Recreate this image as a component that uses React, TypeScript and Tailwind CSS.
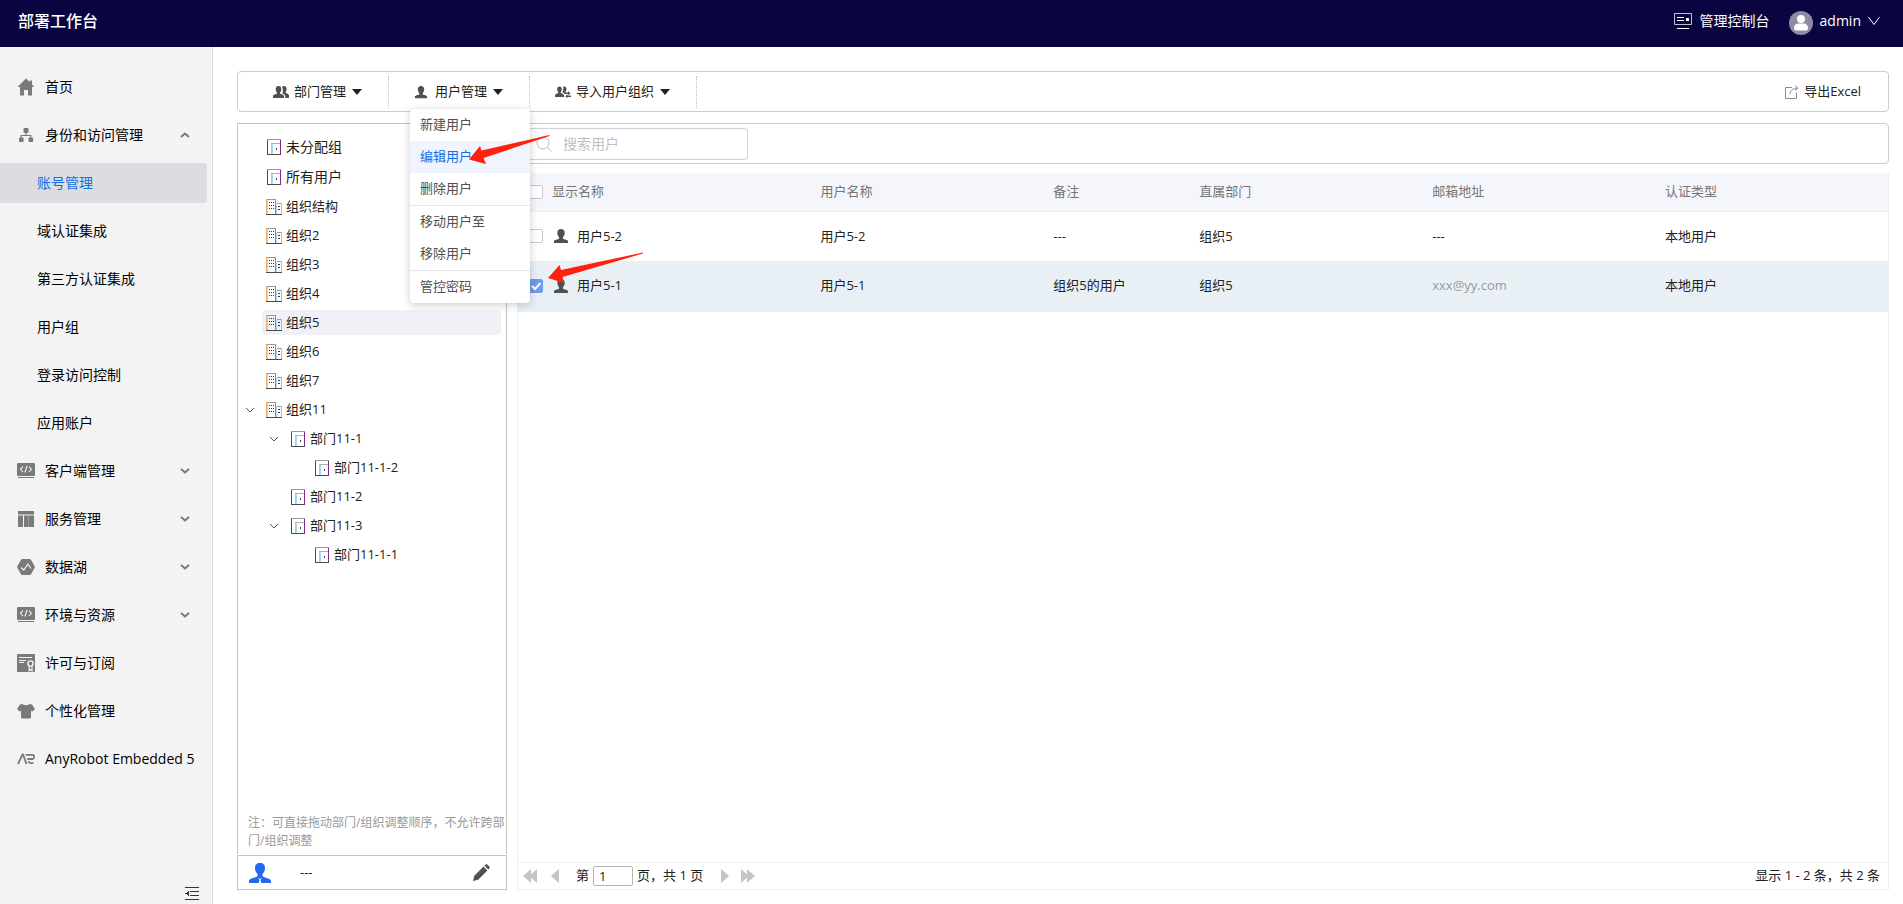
import { Fragment, type ReactNode } from "react";

import clsx from "clsx";

type IconProps = { className?: string };

function HomeIcon() {
  return (
    <svg viewBox="0 0 18 18" className="size-[18px]" fill="currentColor">
      <path d="M9 .5 13 4V2.500h2V6.500L17.500 9H15v8.500h-4V12H7v5.500H3V9H.5z" />
    </svg>
  );
}

function OrgChartIcon() {
  return (
    <svg viewBox="0 0 18 18" className="size-[18px]" fill="currentColor">
      <rect x="6.5" y="2" width="5" height="5" rx="1" />
      <rect x="2" y="11.5" width="4.6" height="4.5" rx="1" />
      <rect x="11.5" y="11.5" width="4.6" height="4.5" rx="1" />
      <path
        d="M9 7v2.500M4.200 12V9.500h9.600V12"
        fill="none"
        stroke="currentColor"
        strokeWidth="1.2"
      />
    </svg>
  );
}

function ClientIcon() {
  return (
    <svg viewBox="0 0 18 18" className="size-[18px]" fill="currentColor">
      <rect x="0" y="1" width="18" height="13" rx="1" />
      <rect x="1" y="15" width="16" height="1" />
      <path
        d="M6 4.500 3.500 7.300 6 10M12 4.500l2.500 2.800L12 10M10 4 8 10.500"
        fill="none"
        stroke="#f3f3f3"
        strokeWidth="1.1"
      />
    </svg>
  );
}

function ServiceIcon() {
  return (
    <svg viewBox="0 0 18 18" className="size-[18px]" fill="currentColor">
      <path d="M1 1h16v3.500H1zM1 5.500h5V17H1zM7 5.500h10V17H7z" />
      <path d="M11.500 5.500v11.500" stroke="#9a9a9a" strokeWidth="1" />
    </svg>
  );
}

function DataLakeIcon() {
  return (
    <svg viewBox="0 0 18 18" className="size-[18px]" fill="currentColor">
      <path d="M5.300 1h7.400a1.500 1.500 0 0 1 1.300.8L17.700 8.300a1.500 1.500 0 0 1 0 1.400L14 16.200a1.500 1.500 0 0 1-1.300.8H5.300a1.500 1.500 0 0 1-1.300-.8L.3 9.700a1.500 1.500 0 0 1 0-1.400L4 1.800A1.500 1.500 0 0 1 5.300 1z" />
      <path
        d="M4 9.500 6.800 12 11 6l3 4.500"
        fill="none"
        stroke="#f3f3f3"
        strokeWidth="1.2"
      />
    </svg>
  );
}

function LicenseIcon() {
  return (
    <svg viewBox="0 0 18 18" className="size-[18px]" fill="currentColor">
      <rect width="18" height="18" rx="1" />
      <g fill="none" stroke="#f3f3f3">
        <path d="M2 3.500h13M2 6.500h7M2 8.500h5" strokeWidth="1.1" />
        <circle cx="13.5" cy="9.5" r="2.6" strokeWidth="1.4" />
        <path d="M12.200 12v4.800l1.400-1 1.400 1V12" strokeWidth="1.2" />
      </g>
    </svg>
  );
}

function ShirtIcon() {
  return (
    <svg viewBox="0 0 18 18" className="size-[18px]" fill="currentColor">
      <path d="M5.500 2C6.500 3.500 11.500 3.500 12.500 2L15 2.500 18 7l-2.500 2.500-1.500-.8V15a1.500 1.500 0 0 1-1.500 1.500h-7A1.500 1.500 0 0 1 4 15V8.700l-1.500.8L0 7l3-4.500z" />
    </svg>
  );
}

function RobotIcon() {
  return (
    <svg
      viewBox="0 0 18 18"
      className="size-[18px]"
      fill="none"
      stroke="currentColor"
      strokeWidth="1.8"
    >
      <path d="M1 14 5.500 4.500H6L9.500 14" />
      <path d="M8.500 4.900h7.300q1.300 0 1.300 1.800t-1.300 2.300h-5.600" />
      <path d="M11 11.500 13.500 13.200H16.500" />
    </svg>
  );
}

function PersonIcon({ className }: IconProps) {
  return (
    <svg viewBox="0 0 16 16" className={className} fill="currentColor">
      <path d="M8 1c2.300 0 3.700 1.500 3.700 3.800 0 1.700-.7 3.300-1.700 4.200v1.800c1 .8 5 .8 5 2.700V15H1v-1.500c0-1.900 4-1.900 5-2.700V9C5 8.100 4.300 6.500 4.300 4.800 4.300 2.500 5.700 1 8 1z" />
    </svg>
  );
}

function GroupIcon() {
  return (
    <svg viewBox="0 0 16 16" className="size-4" fill="currentColor">
      <path d="M5.500 2c1.800 0 2.800 1.200 2.800 3S7.600 8 7 8.600v1C7.800 10.300 11 10.500 11 12.300V14H0v-1.700c0-1.800 3.200-2 4-2.700v-1C3.400 8 2.700 6.800 2.700 5s1-3 2.800-3z" />
      <path d="M9 2.800C9.500 2.300 10.100 2 11 2c1.800 0 2.600 1.200 2.600 2.800 0 1.300-.4 2.400-1 3v1c.8.700 3.400 1 3.400 2.700V14h-3.800v-2c0-1.500-1.500-2-2.700-2.600C10 8 10.200 4.500 9 2.800z" />
    </svg>
  );
}

function ImportIcon() {
  return (
    <svg viewBox="0 0 16 16" className="size-4" fill="currentColor">
      <path d="M4.500 2.500c1.500 0 2.300 1 2.300 2.500S6.300 7.500 5.800 8v1c.6.500 3.200.8 3.200 2.300V13H0v-1.700C0 9.800 2.600 9.500 3.200 9V8c-.5-.5-1-1.500-1-3s.8-2.500 2.300-2.500z" />
      <path d="M8 2.800c1.800-.8 3.500.2 3.500 2.200 0 1-.3 2-1 2.500v1H13V7.200l2.500 2L13 11.200V10H9.500C9 9 7.500 8.500 7.500 8 8.500 6 8.600 4 8 2.800zM16 11.500v1.400h-3.500V14L10 12.200l2.500-1.800v1.100z" />
    </svg>
  );
}

function ChevronIcon({ className }: IconProps) {
  return (
    <svg
      viewBox="0 0 10 10"
      className={className}
      fill="none"
      stroke="currentColor"
    >
      <path d="m1 3 4 4 4-4" />
    </svg>
  );
}

function DeptIcon() {
  return (
    <svg
      viewBox="0 0 14 16"
      className="mr-px h-4 w-3.5 shrink-0"
      shapeRendering="crispEdges"
    >
      <path d="M0 0h14v1H0z" fill="#999" />
      <path d="M0 1h1v14H0zM13 1h1v14h-1z" fill="#82288c" />
      <path d="M0 15h14v1H0z" fill="#4a4a4a" />
      <path d="M4 4h9v1H4z" fill="#b0b0b0" />
      <path d="M4 5h1v10H4z" fill="#f0bd7c" />
      <path d="M5 5h1v10H5z" fill="#a9d9f5" />
      <path d="M9 9h1v2H9z" fill="#444" />
    </svg>
  );
}

function BuildingIcon() {
  return (
    <svg
      viewBox="0 0 16 16"
      className="size-4 shrink-0"
      shapeRendering="crispEdges"
    >
      <path d="M1 0h9v1H1zM11 4h4v1h-4z" fill="#999" />
      <path d="M0 0h1v15H0zM15 4h1v11h-1z" fill="#eab26a" />
      <path d="M1 1h1v14H1zM10 5h1v10h-1z" fill="#a9d9f5" />
      <path d="M9 1h1v14H9z" fill="#6f8fb0" />
      <path
        d="M3 3h1v1H3zM5 3h1v1H5zM7 3h1v1H7zM3 6h1v1H3zM5 6h1v1H5zM7 6h1v1H7zM3 9h1v1H3zM5 9h1v1H5zM7 9h1v1H7zM12 7h2v1h-2zM12 10h2v1h-2z"
        fill="#333"
      />
      <path d="M0 15h16v1H0z" fill="#4a4a4a" />
    </svg>
  );
}

type NavItem = {
  label: string;
  icon: ReactNode;
  arrow?: "up" | "down";
  children?: string[];
};

const NAV: NavItem[] = [
  { label: "首页", icon: <HomeIcon /> },
  {
    label: "身份和访问管理",
    icon: <OrgChartIcon />,
    arrow: "up",
    children: [
      "账号管理",
      "域认证集成",
      "第三方认证集成",
      "用户组",
      "登录访问控制",
      "应用账户",
    ],
  },
  { label: "客户端管理", icon: <ClientIcon />, arrow: "down" },
  { label: "服务管理", icon: <ServiceIcon />, arrow: "down" },
  { label: "数据湖", icon: <DataLakeIcon />, arrow: "down" },
  { label: "环境与资源", icon: <ClientIcon />, arrow: "down" },
  { label: "许可与订阅", icon: <LicenseIcon /> },
  { label: "个性化管理", icon: <ShirtIcon /> },
  { label: "AnyRobot Embedded 5", icon: <RobotIcon /> },
];

const MENU_GROUPS = [
  ["新建用户", "编辑用户", "删除用户"],
  ["移动用户至", "移除用户"],
  ["管控密码"],
];

type TreeNode = {
  label: string;
  kind: "dept" | "org";
  level: number;
  open?: boolean;
};

const TREE: TreeNode[] = [
  { label: "组织结构", kind: "org", level: 0 },
  { label: "组织2", kind: "org", level: 0 },
  { label: "组织3", kind: "org", level: 0 },
  { label: "组织4", kind: "org", level: 0 },
  { label: "组织5", kind: "org", level: 0 },
  { label: "组织6", kind: "org", level: 0 },
  { label: "组织7", kind: "org", level: 0 },
  { label: "组织11", kind: "org", level: 0, open: true },
  { label: "部门11-1", kind: "dept", level: 1, open: true },
  { label: "部门11-1-2", kind: "dept", level: 2 },
  { label: "部门11-2", kind: "dept", level: 1 },
  { label: "部门11-3", kind: "dept", level: 1, open: true },
  { label: "部门11-1-1", kind: "dept", level: 2 },
];

const USERS = [
  {
    name: "用户5-2",
    login: "用户5-2",
    note: "---",
    dept: "组织5",
    email: "---",
    auth: "本地用户",
    checked: false,
  },
  {
    name: "用户5-1",
    login: "用户5-1",
    note: "组织5的用户",
    dept: "组织5",
    email: "xxx@yy.com",
    auth: "本地用户",
    checked: true,
  },
];

function Header() {
  return (
    <header className="flex h-[47px] shrink-0 items-center justify-between bg-[#0a0540] pr-[23px] pb-1.5 pl-[18px] text-sm text-white">
      <h1 className="text-base font-medium">部署工作台</h1>
      <div className="flex items-center">
        <a href="#" className="flex items-center gap-2">
          <svg
            viewBox="0 0 18 16"
            className="h-4 w-[18px]"
            fill="none"
            stroke="currentColor"
          >
            <path d="M.5.500h17v11H.5z" opacity=".75" />
            <path d="M3 4.500h7M3 7.500h7M3 15.500h12" />
            <path d="M12 5h3v3h-3z" fill="currentColor" stroke="none" />
          </svg>
          管理控制台
        </a>
        <button type="button" className="ml-[19px] flex items-center gap-[7px]">
          <svg viewBox="0 0 24 24" className="mt-1 size-6">
            <circle cx="12" cy="12" r="12" fill="#8d8ba6" />
            <circle cx="12" cy="8" r="4" fill="#fff" />
            <path
              d="M5 17c0-3 2-4.500 4-4.500h6c2 0 4 1.500 4 4.500 0 2-1 2.500-2 2.500H7c-1 0-2-.5-2-2.500z"
              fill="#fff"
            />
          </svg>
          admin
          <svg viewBox="0 0 12 12" className="size-3" fill="none" stroke="currentColor">
            <path d="m.5 2 5.500 7.500L11.500 2" />
          </svg>
        </button>
      </div>
    </header>
  );
}

function Sidebar() {
  return (
    <nav className="flex w-[213px] shrink-0 flex-col border-r border-[#dcdcdc] bg-[#f3f3f3] pt-5 text-sm text-black">
      <ul className="flex flex-col gap-2">
        {NAV.map((item) => (
          <Fragment key={item.label}>
            <li>
              <a href="#" className="flex h-10 items-center pr-[22px] pl-[17px]">
                <span className="mr-2.5 text-[#7a7a7a]">{item.icon}</span>
                <span className="flex-1 whitespace-nowrap">{item.label}</span>
                {item.arrow && (
                  <svg
                    viewBox="0 0 10 10"
                    className={clsx(
                      "size-2.5 text-[#777]",
                      item.arrow === "up" && "rotate-180",
                    )}
                    fill="none"
                    stroke="currentColor"
                    strokeWidth="2"
                  >
                    <path d="m1 3 4 3.500L9 3" />
                  </svg>
                )}
              </a>
            </li>
            {item.children?.map((label, i) => (
              <li key={label}>
                <a
                  href="#"
                  className={clsx(
                    "mr-[5px] flex h-10 items-center rounded-r-sm pl-[37px]",
                    i === 0 && "bg-[#dcdde1] text-[#126ee3]",
                  )}
                >
                  {label}
                </a>
              </li>
            ))}
          </Fragment>
        ))}
      </ul>
      <button
        type="button"
        aria-label="收起菜单"
        className="mt-auto mr-[13px] mb-[3px] self-end"
      >
        <svg
          viewBox="0 0 14 14"
          className="size-3.5"
          stroke="#333"
          shapeRendering="crispEdges"
        >
          <path d="M0 .5h14M5 4.500h9M5 8.500h9M0 12.500h14" />
          <path d="M3.500 4v5L.5 6.500z" fill="#333" stroke="none" />
        </svg>
      </button>
    </nav>
  );
}

function UserMenu() {
  return (
    <div
      role="menu"
      className="absolute top-full -right-px z-20 mt-px w-[120px] overflow-hidden rounded-sm bg-white text-[#505050] shadow-[0_2px_8px_rgba(0,0,0,0.2)]"
    >
      {MENU_GROUPS.map((group, i) => (
        <div key={group[0]} className={clsx(i > 0 && "border-t border-[#e6e6e6]")}>
          {group.map((label) => (
            <button
              key={label}
              type="button"
              role="menuitem"
              className={clsx(
                "flex h-8 w-full items-center px-2.5",
                label === "编辑用户" && "bg-[#eff4fe] text-[#126ee3]",
              )}
            >
              {label}
            </button>
          ))}
        </div>
      ))}
    </div>
  );
}

function ToolbarItem({
  icon,
  label,
  children,
}: {
  icon: ReactNode;
  label: string;
  children?: ReactNode;
}) {
  return (
    <div className="relative flex h-8 border-r border-dotted border-[#bbb]">
      <button type="button" className="flex items-center pr-[26px] pl-[25px]">
        <span className="mr-[5px] text-[#505050]">{icon}</span>
        {label}
        <svg viewBox="0 0 10 6" className="ml-1.5 h-1.5 w-2.5" fill="#212121">
          <path d="M0 0h10L5 6z" />
        </svg>
      </button>
      {children}
    </div>
  );
}

function Toolbar() {
  return (
    <div className="flex h-[41px] items-center rounded-sm border border-[#ccc] pr-[27px] pl-2.5">
      <ToolbarItem icon={<GroupIcon />} label="部门管理" />
      <ToolbarItem
        icon={<PersonIcon className="mr-0.5 size-3.5" />}
        label="用户管理"
      >
        <UserMenu />
      </ToolbarItem>
      <ToolbarItem icon={<ImportIcon />} label="导入用户组织" />
      <button type="button" className="ml-auto flex items-center gap-[5px]">
        <svg
          viewBox="0 0 14 14"
          className="size-3.5"
          fill="none"
          stroke="#8a8a8a"
        >
          <path d="M7 2.500H.5v11h11V7.500" />
          <path d="M5 9c.2-3.500 2.500-5.500 7.500-5.800M10 .8l2.800 2.300L10 5.500" />
        </svg>
        导出Excel
      </button>
    </div>
  );
}

const INDENT = ["pl-0", "pl-6", "pl-12"];

function OrgPanel() {
  return (
    <aside className="flex w-[270px] shrink-0 flex-col">
      <div className="flex flex-1 flex-col border border-b-0 border-[#c4c4c4] pt-2.5">
        <ul className="flex flex-col gap-1 text-sm">
          {["未分配组", "所有用户"].map((label) => (
            <li key={label}>
              <button
                type="button"
                className="flex h-[26px] items-center gap-1 pl-[29px]"
              >
                <DeptIcon />
                {label}
              </button>
            </li>
          ))}
        </ul>
        <ul className="mt-1 flex flex-col gap-1 pr-[5px]">
          {TREE.map((node) => (
            <li key={node.label} className={clsx("flex", INDENT[node.level])}>
              <span className="flex w-6 items-center justify-center text-[#555]">
                {node.open && <ChevronIcon className="size-2.5" />}
              </span>
              <button
                type="button"
                className={clsx(
                  "flex h-[25px] flex-1 items-center rounded-sm",
                  node.kind === "org" ? "gap-1 pl-1" : "gap-1 pl-[5px]",
                  node.label === "组织5" && "bg-[#f0f0f7]",
                )}
              >
                {node.kind === "org" ? <BuildingIcon /> : <DeptIcon />}
                {node.label}
              </button>
            </li>
          ))}
        </ul>
        <p className="mt-auto pb-1 pl-2.5 text-xs leading-[18px] text-[#999]">
          注：可直接拖动部门/组织调整顺序，不允许跨部门/组织调整
        </p>
      </div>
      <div className="mt-px flex h-[35px] items-center border border-[#c4c4c4] pr-4 pl-[11px]">
        <svg viewBox="0 0 22 22" className="size-[22px] text-[#2468f2]" fill="currentColor">
          <path d="M11 1c3.500 0 5 2 5 5 0 2.500-1 4.500-2.500 6v2c1.500 2.200 8.500 2 8.500 5v2H0v-2c0-3 7-2.800 8.500-5v-2C7 10.500 6 8.500 6 6c0-3 1.500-5 5-5z" />
          <path d="m9 15.500 2 1.500 2-1.500-1.500 2.500.8 3H9.700l.8-3z" fill="#fff" />
        </svg>
        <span className="ml-[29px]">---</span>
        <button type="button" aria-label="编辑" className="ml-auto">
          <svg viewBox="0 0 18 18" className="size-[18px]" fill="#505050">
            <path d="m1 17 1.300-5.200L11.500 2.600l3.900 3.900-9.200 9.200zM12.500 1.700l1-1c.6-.6 1.400-.6 2 0l1.800 1.800c.6.6.6 1.400 0 2l-1 1z" />
          </svg>
        </button>
      </div>
    </aside>
  );
}

function Checkbox({ label, checked }: { label: string; checked?: boolean }) {
  return (
    <span className="relative ml-[11px] flex size-3.5">
      <input
        type="checkbox"
        aria-label={label}
        defaultChecked={checked}
        className="peer size-3.5 appearance-none rounded-xs border border-[#ccc] bg-white checked:border-[#6f9af0] checked:bg-[#6f9af0]"
      />
      <svg
        viewBox="0 0 14 14"
        className="pointer-events-none absolute inset-0 hidden size-3.5 peer-checked:block"
        fill="none"
        stroke="#fff"
        strokeWidth="2"
      >
        <path d="m3 7 3 3 5.500-6" />
      </svg>
    </span>
  );
}

function UserTable() {
  return (
    <table className="w-full table-fixed border-collapse text-left">
      <colgroup>
        <col className="w-[34px]" />
        <col />
        <col className="w-[17%]" />
        <col className="w-[146px]" />
        <col className="w-[17%]" />
        <col className="w-[17%]" />
        <col className="w-[17%]" />
      </colgroup>
      <thead>
        <tr className="h-[38px] border-b border-[#efefef] bg-[#f5f6fc] text-[#757575]">
          <th>
            <Checkbox label="全选" />
          </th>
          <th className="font-normal">显示名称</th>
          {["用户名称", "备注", "直属部门", "邮箱地址", "认证类型"].map(
            (title) => (
              <th key={title} className="px-2.5 font-normal">
                {title}
              </th>
            ),
          )}
        </tr>
      </thead>
      <tbody>
        {USERS.map((user) => (
          <tr
            key={user.name}
            className={clsx(
              "h-[50px]",
              user.checked && "border-b border-[#efefef] bg-[#e8f0f6]",
            )}
          >
            <td>
              <Checkbox label={user.name} checked={user.checked} />
            </td>
            <td>
              <span className="flex items-center gap-2">
                <PersonIcon className="ml-px size-4 text-[#505050]" />
                {user.name}
              </span>
            </td>
            <td className="px-2.5">{user.login}</td>
            <td className="px-2.5">{user.note}</td>
            <td className="px-2.5">{user.dept}</td>
            <td className={clsx("px-2.5", user.checked && "text-[#999]")}>
              {user.email}
            </td>
            <td className="px-2.5">{user.auth}</td>
          </tr>
        ))}
      </tbody>
    </table>
  );
}

function Pager() {
  return (
    <div className="mt-auto flex h-7 items-center border-y border-[#efefef] pr-2 pl-[5px]">
      <button type="button" aria-label="首页" className="text-[#c4c4c4]">
        <svg viewBox="0 0 14 14" className="size-3.5" fill="currentColor">
          <path d="M8 0v14L0 7zM14 0v14L6 7z" />
        </svg>
      </button>
      <button type="button" aria-label="上一页" className="ml-3.5 text-[#c4c4c4]">
        <svg viewBox="0 0 8 14" className="h-3.5 w-2" fill="currentColor">
          <path d="M8 0v14L0 7z" />
        </svg>
      </button>
      <label className="ml-[17px] flex items-center gap-1">
        第
        <input
          type="text"
          defaultValue="1"
          className="h-5 w-10 rounded-xs border border-[#b5b5b5] px-[5px]"
        />
      </label>
      <span className="ml-1">页，共 1 页</span>
      <button type="button" aria-label="下一页" className="ml-[18px] text-[#c4c4c4]">
        <svg viewBox="0 0 8 14" className="h-3.5 w-2" fill="currentColor">
          <path d="M0 0v14l8-7z" />
        </svg>
      </button>
      <button type="button" aria-label="末页" className="ml-3 text-[#c4c4c4]">
        <svg viewBox="0 0 14 14" className="size-3.5" fill="currentColor">
          <path d="M0 0v14l8-7zM6 0v14l8-7z" />
        </svg>
      </button>
      <span className="ml-auto">显示 1 - 2 条，共 2 条</span>
    </div>
  );
}

function UserPanel() {
  return (
    <section className="flex min-w-0 flex-1 flex-col">
      <div className="flex h-[41px] items-center rounded-sm border border-[#ccc] pl-[9px]">
        <label className="flex h-8 w-[221px] items-center gap-[11px] rounded-sm border border-[#d0d0d8] px-2 text-sm">
          <svg
            viewBox="0 0 16 16"
            className="size-4 shrink-0"
            fill="none"
            stroke="#bbb"
          >
            <circle cx="7" cy="7" r="6" />
            <path d="m11.300 11.300 4 4" />
          </svg>
          <input
            type="text"
            aria-label="搜索用户"
            placeholder="搜索用户"
            className="w-full outline-none placeholder:text-[#bfbfbf]"
          />
        </label>
      </div>
      <div className="mt-[9px] flex flex-1 flex-col border-x border-[#efefef]">
        <UserTable />
        <Pager />
      </div>
    </section>
  );
}

// Red pointers drawn over the menu and the selected row.
function Pointers() {
  return (
    <>
      <svg
        viewBox="0 0 84 32"
        className="pointer-events-none absolute top-[133px] left-[468px] z-30 h-8 w-[84px]"
        fill="#ff2010"
      >
        <path d="M1 26.500 12 13l1.500 4.500L81.500 2v1L15.500 25l2.500 6z" />
      </svg>
      <svg
        viewBox="0 0 98 32"
        className="pointer-events-none absolute top-[252px] left-[547px] z-30 h-8 w-[98px]"
        fill="#ff2010"
      >
        <path d="M1 26 12.500 13l1.500 5L96 .5v1L15.500 25l1.500 6z" />
      </svg>
    </>
  );
}

export default function App() {
  return (
    <div className="relative flex min-h-screen flex-col bg-white font-['Open_Sans','Noto_Sans_CJK_SC',sans-serif] text-[13px] text-[#212121]">
      <Header />
      <div className="flex flex-1">
        <Sidebar />
        <main className="flex min-w-0 flex-1 flex-col gap-[11px] pt-6 pr-3.5 pb-3.5 pl-6">
          <Toolbar />
          <div className="flex flex-1 gap-2.5">
            <OrgPanel />
            <UserPanel />
          </div>
        </main>
      </div>
      <Pointers />
    </div>
  );
}
